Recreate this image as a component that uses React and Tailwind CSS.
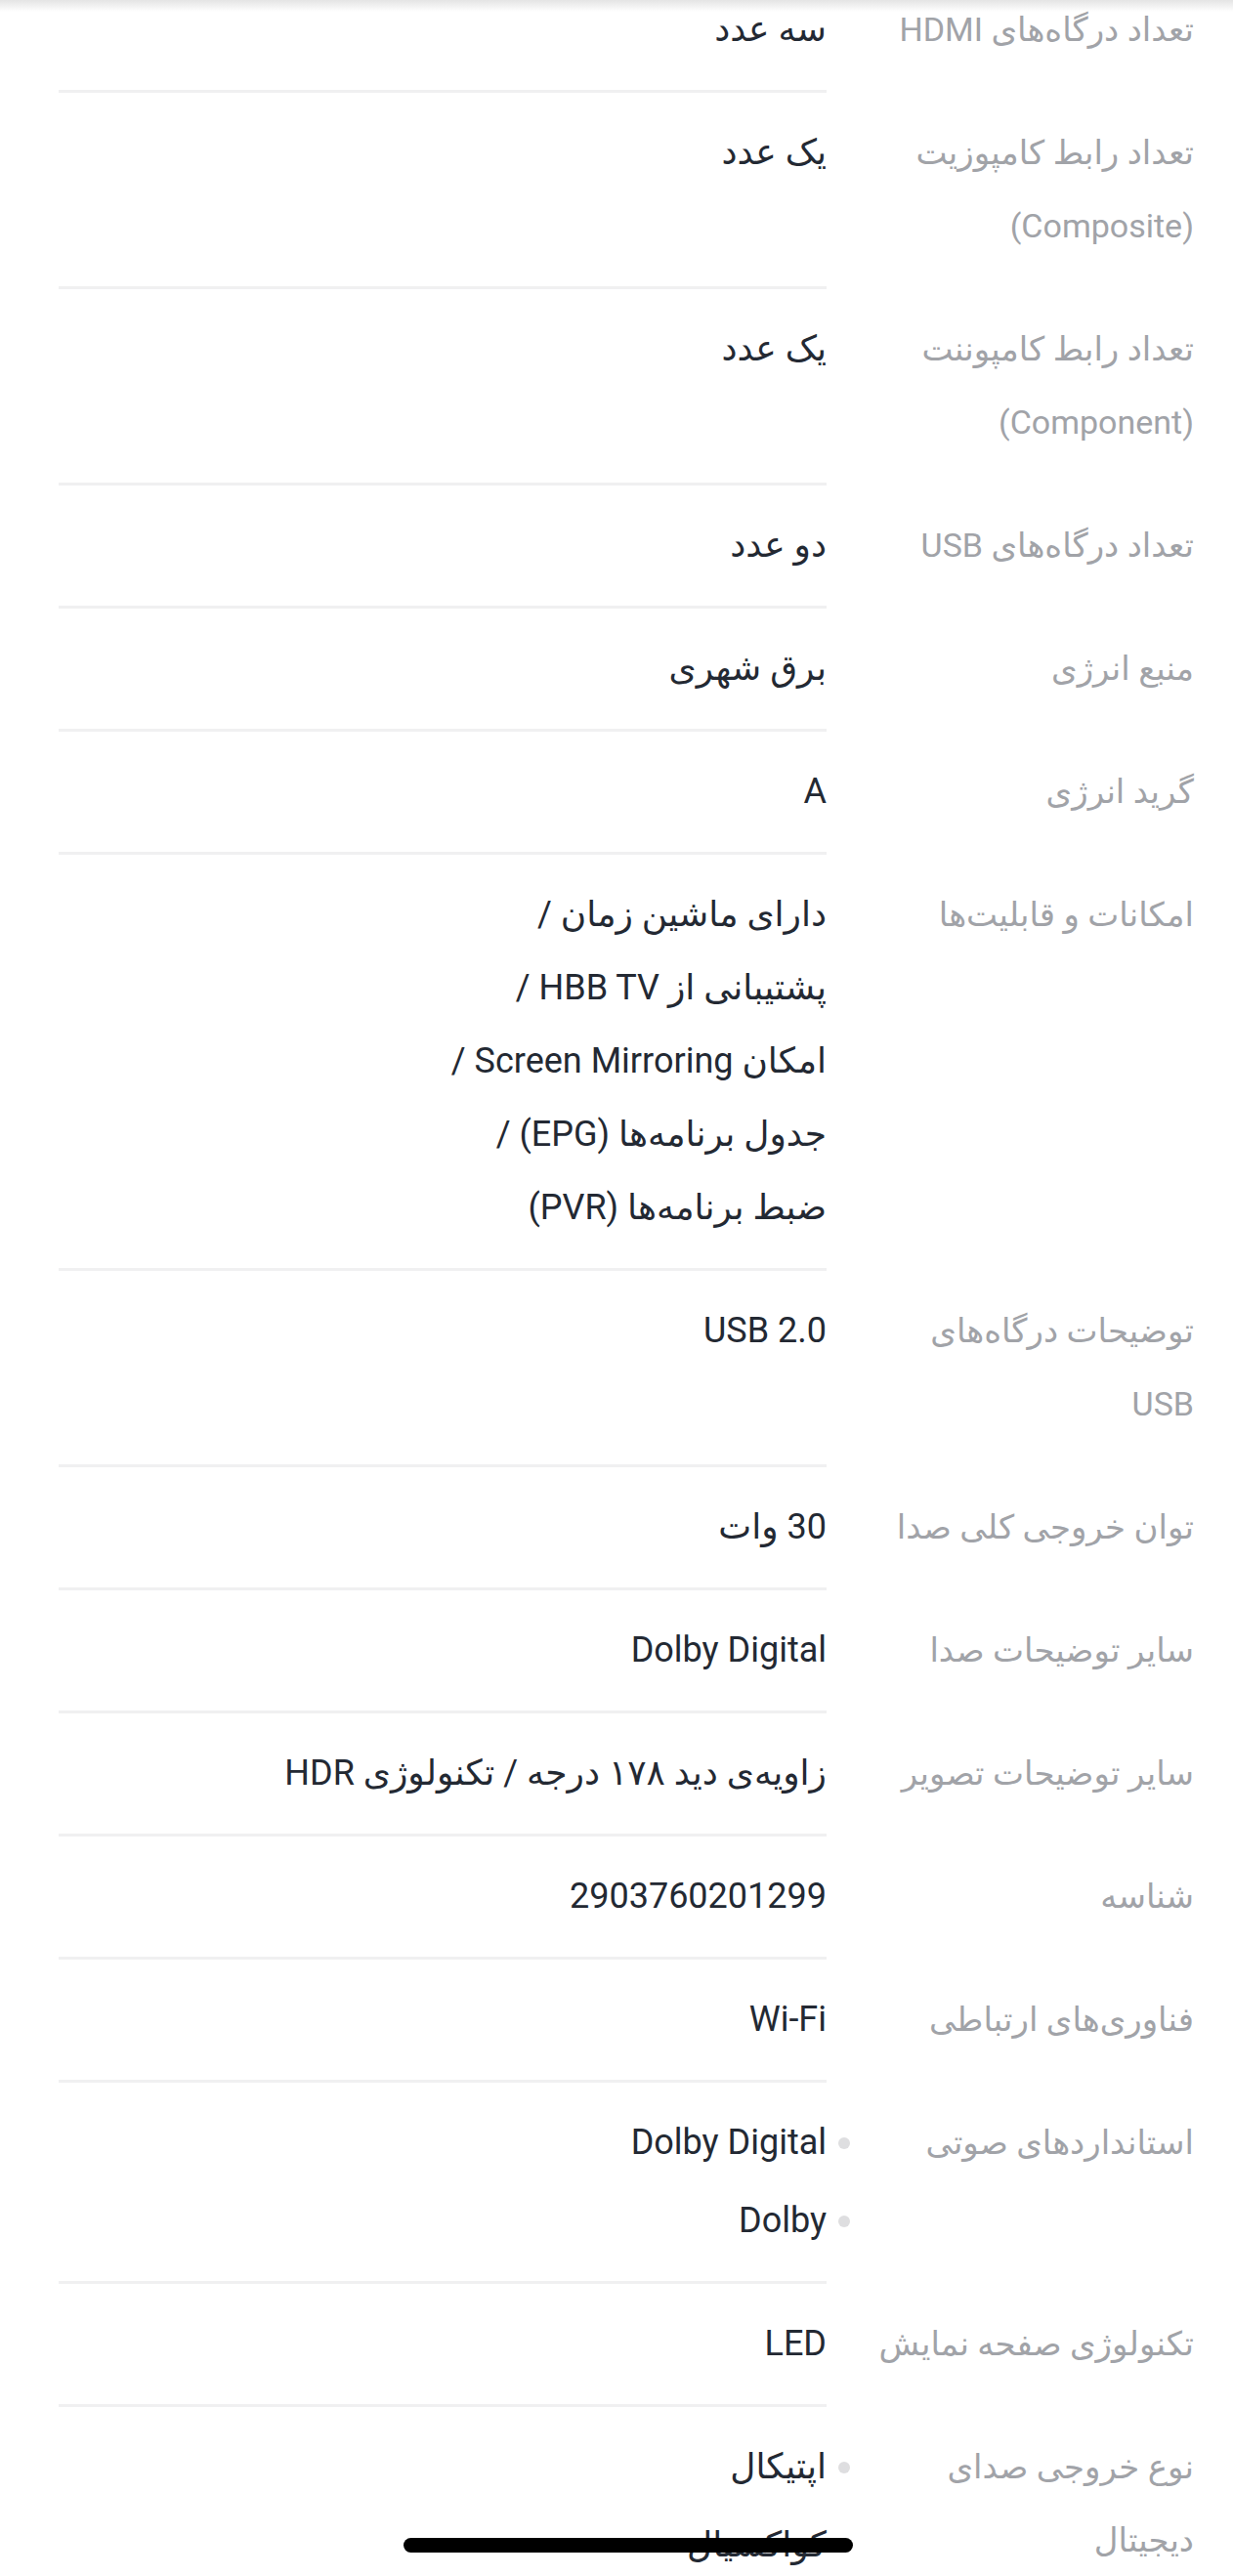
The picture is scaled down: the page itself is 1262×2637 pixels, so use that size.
import React from 'react';

// مشخصات فنی - ادامه‌ی لیست
const specs = [
    { label: 'تعداد درگاه\u200cهای HDMI', lines: ['سه عدد'] },
    { label: 'تعداد رابط کامپوزیت (Composite)', lines: ['یک عدد'] },
    { label: 'تعداد رابط کامپوننت (Component)', lines: ['یک عدد'] },
    { label: 'تعداد درگاه\u200cهای USB', lines: ['دو عدد'] },
    { label: 'منبع انرژی', lines: ['برق شهری'] },
    { label: 'گرید انرژی', lines: ['A'] },
    {
        label: 'امکانات و قابلیت\u200cها',
        lines: [
            'دارای ماشین زمان /',
            'پشتیبانی از HBB TV /',
            'امکان Screen Mirroring /',
            'جدول برنامه\u200cها (EPG) /',
            'ضبط برنامه\u200cها (PVR)',
        ],
    },
    { label: 'توضیحات درگاه\u200cهای USB', lines: ['USB 2.0'] },
    { label: 'توان خروجی کلی صدا', lines: ['30 وات'] },
    { label: 'سایر توضیحات صدا', lines: ['Dolby Digital'] },
    { label: 'سایر توضیحات تصویر', lines: ['زاویه\u200cی دید ۱۷۸ درجه / تکنولوژی HDR'] },
    { label: 'شناسه', lines: ['2903760201299'] },
    { label: 'فناوری\u200cهای ارتباطی', lines: ['Wi-Fi'] },
    { label: 'استانداردهای صوتی', bullets: ['Dolby Digital', 'Dolby'] },
    { label: 'تکنولوژی صفحه نمایش', lines: ['LED'] },
    { label: 'نوع خروجی صدای دیجیتال', bullets: ['اپتیکال', 'کواکسیال'] },
];

const SpecRow = ({ spec }) => {
    return (
        <div className="flex">
            {/* عنوان */}
            <div className="w-[376px] shrink-0 pl-[40px] pt-[24px] pb-[27px] text-[34px] leading-[75px] text-[#a1a3a8]">
                {spec.label}
            </div>

            {/* مقدار */}
            <div className="flex-1 py-[24px] border-b-[3px] border-[#f0f0f1] text-[36px] leading-[75px] text-[#232933]">
                {spec.bullets ? (
                    <ul className="flex flex-col gap-[5px] -mr-[24px]">
                        {spec.bullets.map((b) => (
                            <li key={b} className="flex items-center gap-[12px]">
                                <span className="w-[12px] h-[12px] rounded-full bg-[#dedee0] shrink-0" />
                                <span>{b}</span>
                            </li>
                        ))}
                    </ul>
                ) : (
                    spec.lines.map((l) => <div key={l}>{l}</div>)
                )}
            </div>
        </div>
    );
};

export default function App() {
    return (
        <div
            dir="rtl"
            className="relative w-full h-[2637px] overflow-hidden bg-white"
            style={{ fontFamily: 'Roboto, "DejaVu Sans", sans-serif' }}
        >
            <div className="-mt-[31px] pr-[40px] pl-[60px] flex flex-col">
                {specs.map((s) => (
                    <SpecRow key={s.label} spec={s} />
                ))}
            </div>

            {/* سایه‌ی هدر بالا */}
            <div className="absolute top-0 inset-x-0 h-[12px] bg-gradient-to-b from-[#e4e4e4] to-white/0" />

            {/* نوار خانه */}
            <div className="absolute left-[413px] bottom-[24px] w-[460px] h-[15px] rounded-full bg-black" />
        </div>
    );
}
